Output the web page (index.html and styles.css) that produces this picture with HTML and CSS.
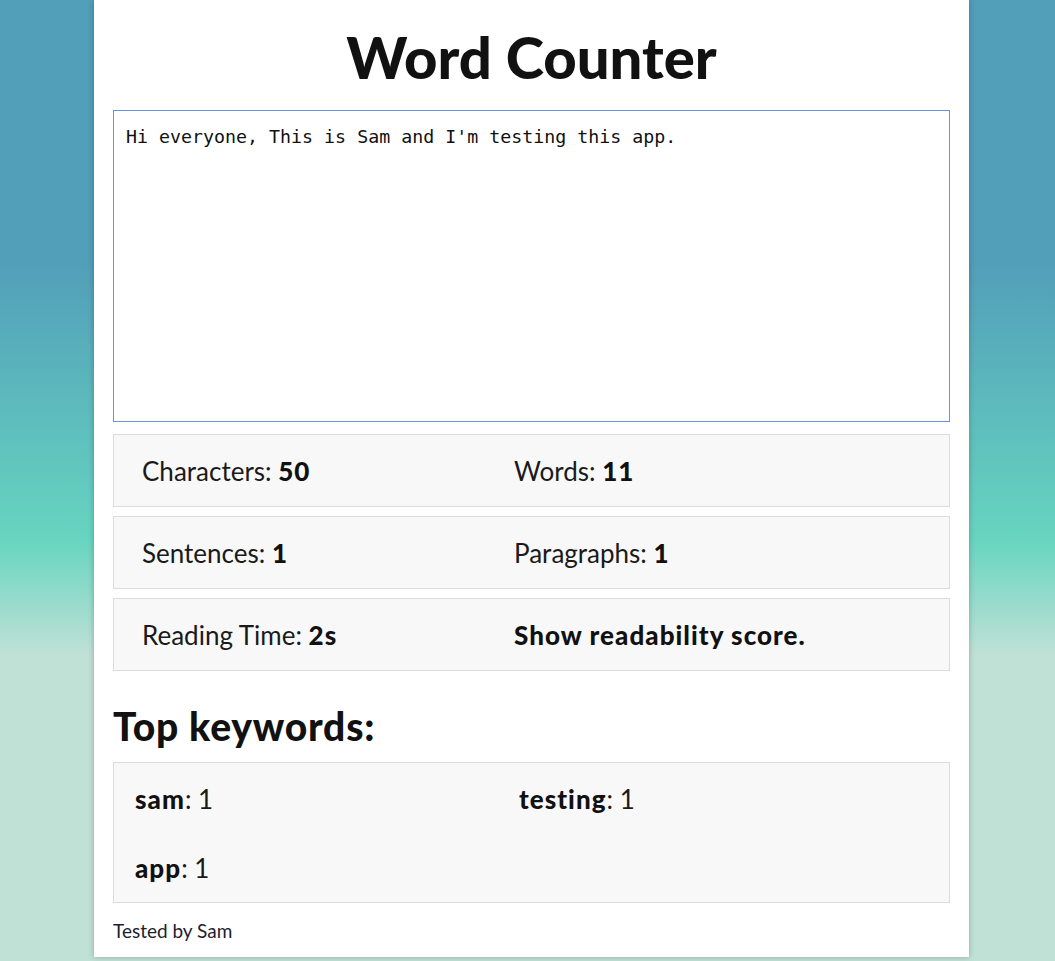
FILE: index.html
```html
<!DOCTYPE html>
<html lang="en">
<head>
<meta charset="utf-8">
<title>Word Counter</title>
<link rel="stylesheet" href="styles.css">
</head>
<body>
<main class="container">
  <h1 class="title">Word Counter</h1>
  <textarea class="input" spellcheck="false">Hi everyone, This is Sam and I'm testing this app.</textarea>
  <section class="stat-row">
    <div class="stat">Characters: <b>50</b></div>
    <div class="stat">Words: <b>11</b></div>
  </section>
  <section class="stat-row">
    <div class="stat">Sentences: <b>1</b></div>
    <div class="stat">Paragraphs: <b>1</b></div>
  </section>
  <section class="stat-row">
    <div class="stat">Reading Time: <b>2s</b></div>
    <div class="stat"><b>Show readability score.</b></div>
  </section>
  <h2 class="subtitle">Top keywords:</h2>
  <section class="keywords">
    <div class="kw"><b>sam</b>: 1</div>
    <div class="kw"><b>testing</b>: 1</div>
    <div class="kw"><b>app</b>: 1</div>
  </section>
  <footer class="footer">Tested by Sam</footer>
</main>
</body>
</html>
```
FILE: styles.css
```css
html, body {
  margin: 0;
  padding: 0;
}
body {
  min-height: 961px;
  padding-left: 8px;
  font-family: "Source Sans Pro", "Lato", sans-serif;
  color: #1a1a1a;
  background: linear-gradient(to bottom, #529fb9 0px, #529fb9 265px, #67d5c0 540px, #c0e1d6 655px, #c0e1d6 100%);
}
.container {
  width: 837px;
  margin: 0 auto;
  padding: 1px 19px 14px;
  background: #fff;
  box-shadow: 0 0 6px rgba(0, 0, 0, 0.25);
}
.title {
  margin: 24px 0 21px;
  text-align: center;
  font-size: 58px;
  font-weight: 900;
  line-height: 64px;
  color: #111;
}
.input {
  display: block;
  box-sizing: border-box;
  width: 837px;
  height: 312px;
  margin: 0;
  padding: 14px 12px;
  border: 1px solid #6a93e0;
  outline: none;
  resize: none;
  font-family: "DejaVu Sans Mono", monospace;
  font-size: 18.3px;
  line-height: 24px;
  color: #111;
  background: #fff;
}
.stat-row {
  display: grid;
  grid-template-columns: 372px 1fr;
  align-items: center;
  box-sizing: border-box;
  height: 73px;
  margin-top: 9px;
  padding: 0 28px;
  background: #f8f8f8;
  border: 1px solid #dcdcdc;
  font-size: 26px;
}
.input + .stat-row {
  margin-top: 12px;
}
.stat b, .kw b {
  font-weight: 900;
  letter-spacing: 0.04em;
  color: #111;
}
.subtitle {
  margin: 31px 0 12px;
  font-size: 39px;
  font-weight: 900;
  letter-spacing: 0.02em;
  line-height: 48px;
  color: #111;
}
.keywords {
  display: grid;
  grid-template-columns: 384px 1fr;
  grid-auto-rows: 69px;
  align-items: center;
  box-sizing: border-box;
  height: 141px;
  padding: 1px 21px 4px;
  background: #f8f8f8;
  border: 1px solid #dcdcdc;
  font-size: 26px;
}
.footer {
  margin-top: 16px;
  font-size: 19px;
  line-height: 24px;
  color: #1e1e2e;
}
```
